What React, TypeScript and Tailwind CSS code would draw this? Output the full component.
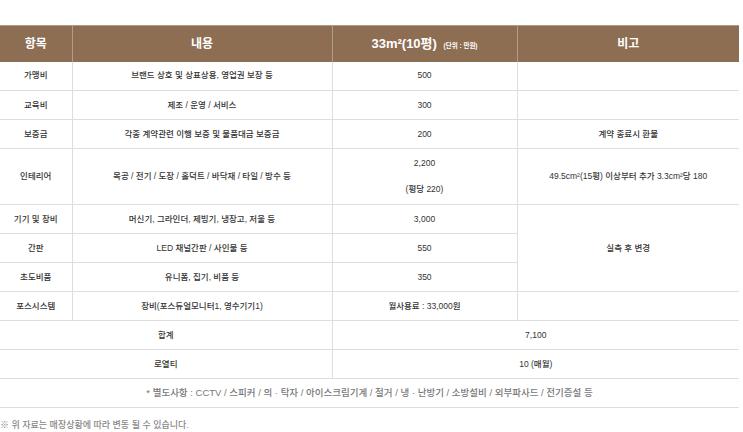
const rows = [
  { item: "가맹비", desc: "브랜드 상호 및 상표상용, 영업권 보장 등", cost: "500" },
  { item: "교육비", desc: "제조 / 운영 / 서비스", cost: "300" },
  { item: "보증금", desc: "각종 계약관련 이행 보증 및 물품대금 보증금", cost: "200" },
];

const td = "border-b border-r border-[#dedede] text-center align-middle";

export default function App() {
  return (
    <div className="w-[743px] h-[432px] bg-white pt-[25px] font-['Liberation_Sans','Noto_Sans_CJK_KR',sans-serif] text-[#333] text-[8.5px] font-medium">
      <table className="w-[739px] table-fixed border-collapse">
        <colgroup>
          <col className="w-[72px]" />
          <col className="w-[260px]" />
          <col className="w-[185px]" />
          <col className="w-[222px]" />
        </colgroup>
        <thead>
          <tr className="h-[36px] bg-[#8d6e53] text-white border-t border-[#b09c8a]">
            <th className="border-r border-[#b09c8a] text-[12px] font-bold">항목</th>
            <th className="border-r border-[#b09c8a] text-[12px] font-bold">내용</th>
            <th className="border-r border-[#b09c8a] text-[13px] font-bold">
              33m²(10평) <span className="ml-[3px] text-[6.5px] font-bold">(단위 : 만원)</span>
            </th>
            <th className="text-[12px] font-bold">비고</th>
          </tr>
        </thead>
        <tbody>
          {rows.map((r, i) => (
            <tr key={i} className="h-[29px]">
              <td className={td}>{r.item}</td>
              <td className={td}>{r.desc}</td>
              <td className={td}>{r.cost}</td>
              <td className="border-b border-[#dedede] text-center">
                {r.item === "보증금" ? "계약 종료시 환불" : ""}
              </td>
            </tr>
          ))}
          <tr className="h-[56px]">
            <td className={td}>인테리어</td>
            <td className={td}>목공 / 전기 / 도장 / 홀덕트 / 바닥재 / 타일 / 방수 등</td>
            <td className={td}>
              <div className="flex flex-col items-center gap-[13px]">
                <span>2,200</span>
                <span>(평당 220)</span>
              </div>
            </td>
            <td className="border-b border-[#dedede] text-center">49.5cm²(15평) 이상부터 추가 3.3cm²당 180</td>
          </tr>
          <tr className="h-[29px]">
            <td className={td}>기기 및 장비</td>
            <td className={td}>머신기, 그라인더, 제빙기, 냉장고, 저울 등</td>
            <td className={td}>3,000</td>
            <td rowSpan={3} className="border-b border-[#dedede] text-center">실측 후 변경</td>
          </tr>
          <tr className="h-[29px]">
            <td className={td}>간판</td>
            <td className={td}>LED 채널간판 / 사인물 등</td>
            <td className={td}>550</td>
          </tr>
          <tr className="h-[29px]">
            <td className={td}>초도비품</td>
            <td className={td}>유니폼, 집기, 비품 등</td>
            <td className={td}>350</td>
          </tr>
          <tr className="h-[29px]">
            <td className={td}>포스시스템</td>
            <td className={td}>장비(포스듀얼모니터1, 영수기기1)</td>
            <td className={td}>월사용료 : 33,000원</td>
            <td className="border-b border-[#dedede]"></td>
          </tr>
          <tr className="h-[29px]">
            <td colSpan={2} className={td}>합계</td>
            <td colSpan={2} className="border-b border-[#dedede] text-center">7,100</td>
          </tr>
          <tr className="h-[29px]">
            <td colSpan={2} className={td}>로열티</td>
            <td colSpan={2} className="border-b border-[#dedede] text-center">10 (매월)</td>
          </tr>
          <tr className="h-[29px]">
            <td colSpan={4} className="border-b border-[#dedede] text-center text-[#777] text-[9.5px]">
              * 별도사항 : CCTV / 스피커 / 의 · 탁자 / 아이스크림기계 / 철거 / 냉 · 난방기 / 소방설비 / 외부파사드 / 전기증설 등
            </td>
          </tr>
        </tbody>
      </table>
      <p className="mt-[11px] text-[9px] text-[#888]">※ 위 자료는 매장상황에 따라 변동 될 수 있습니다.</p>
    </div>
  );
}
